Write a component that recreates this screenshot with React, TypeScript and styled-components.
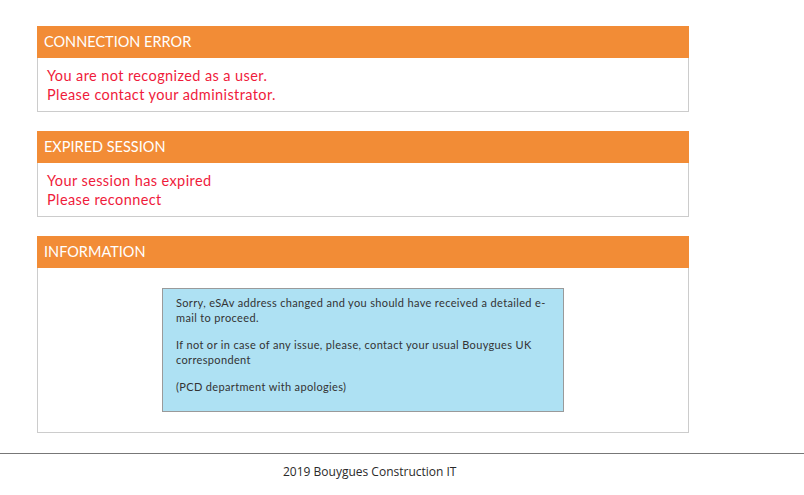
import styled, { createGlobalStyle } from "styled-components";

const GlobalStyle = createGlobalStyle`
  body {
    margin: 0;
    background: #ffffff;
    font-family: "Lato", "Noto Sans", sans-serif;
  }
`;

const Page = styled.div`
  width: 804px;
  min-height: 495px;
`;

const Main = styled.div`
  width: 652px;
  padding: 26px 0 0 37px;
  display: flex;
  flex-direction: column;
  gap: 19px;
`;

const Panel = styled.section`
  display: flex;
  flex-direction: column;
`;

const PanelHeader = styled.div`
  height: 32px;
  background: #f28c36;
  color: #ffffff;
  font-size: 14.5px;
  line-height: 32px;
  padding: 0 7px;
`;

const PanelBody = styled.div<{ $center?: boolean }>`
  border: 1px solid #cccccc;
  border-top: none;
  padding: ${(p) => (p.$center ? "20px 0 20px" : "8px 9px 7px")};
  display: flex;
  flex-direction: column;
  align-items: ${(p) => (p.$center ? "center" : "flex-start")};
`;

const ErrorLine = styled.div`
  color: #ef1b3b;
  font-size: 14.5px;
  line-height: 19px;
  letter-spacing: 0.4px;
`;

const InfoBox = styled.div`
  width: 374px;
  background: #aee1f3;
  border: 1px solid #9a9a9a;
  padding: 6px 13px 17px;
  color: #333333;
  font-size: 11px;
  line-height: 15px;
  letter-spacing: 0.35px;

  p {
    margin: 0 0 12px;
  }
  p:last-child {
    margin-bottom: 0;
  }
`;

const Footer = styled.footer`
  margin-top: 20px;
  border-top: 1px solid #777777;
  padding: 10px 0 0 283px;
  font-family: "Open Sans", sans-serif;
  font-size: 12px;
  color: #2a2a2a;
  line-height: 16px;
`;

export default function App() {
  return (
    <Page>
      <GlobalStyle />
      <Main>
        <Panel>
          <PanelHeader>CONNECTION ERROR</PanelHeader>
          <PanelBody>
            <ErrorLine>You are not recognized as a user.</ErrorLine>
            <ErrorLine>Please contact your administrator.</ErrorLine>
          </PanelBody>
        </Panel>
        <Panel>
          <PanelHeader>EXPIRED SESSION</PanelHeader>
          <PanelBody>
            <ErrorLine>Your session has expired</ErrorLine>
            <ErrorLine>Please reconnect</ErrorLine>
          </PanelBody>
        </Panel>
        <Panel>
          <PanelHeader>INFORMATION</PanelHeader>
          <PanelBody $center>
            <InfoBox>
              <p>
                Sorry, eSAv address changed and you should have received a
                detailed e-mail to proceed.
              </p>
              <p>
                If not or in case of any issue, please, contact your usual
                Bouygues UK correspondent
              </p>
              <p>(PCD department with apologies)</p>
            </InfoBox>
          </PanelBody>
        </Panel>
      </Main>
      <Footer>2019 Bouygues Construction IT</Footer>
    </Page>
  );
}
